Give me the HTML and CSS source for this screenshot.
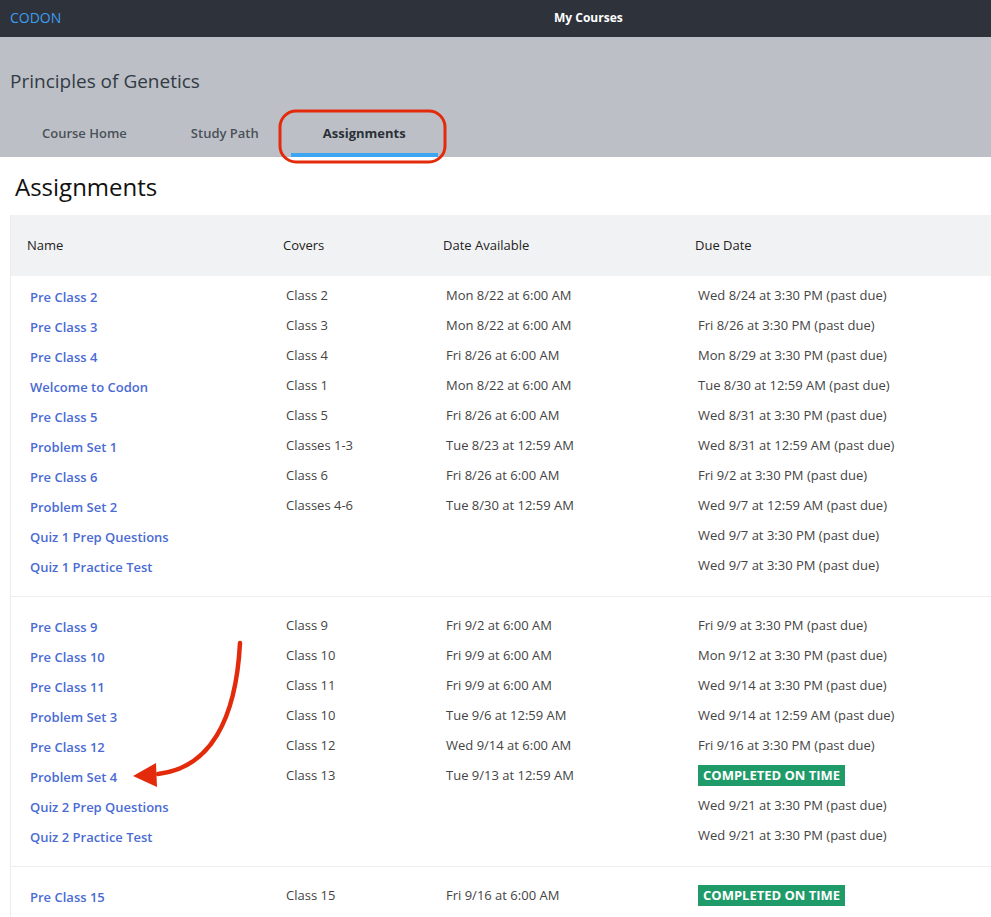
FILE: index.html
```html
<!DOCTYPE html>
<html>
<head>
<meta charset="utf-8">
<link rel="stylesheet" href="styles.css">
</head>
<body>
<div class="page">
  <header class="topbar">
    <span class="logo">CODON</span>
    <span class="topnav">My Courses</span>
  </header>
  <section class="course">
    <h1 class="course-title">Principles of Genetics</h1>
    <nav class="tabs">
      <span class="tab">Course Home</span>
      <span class="tab">Study Path</span>
      <span class="tab active">Assignments</span>
    </nav>
    <svg class="ring" width="172" height="58" viewBox="0 0 172 58"><rect x="2" y="2" width="165" height="51" rx="16" ry="16" fill="none" stroke="#e32b0c" stroke-width="3"/></svg>
  </section>
  <main class="content">
    <h2 class="heading">Assignments</h2>
    <div class="card">
      <div class="thead">
        <span>Name</span><span>Covers</span><span>Date Available</span><span>Due Date</span>
      </div>
      <div class="group first">
        <div class="row"><a>Pre Class 2</a><span>Class 2</span><span>Mon 8/22 at 6:00 AM</span><span>Wed 8/24 at 3:30 PM (past due)</span></div>
        <div class="row"><a>Pre Class 3</a><span>Class 3</span><span>Mon 8/22 at 6:00 AM</span><span>Fri 8/26 at 3:30 PM (past due)</span></div>
        <div class="row"><a>Pre Class 4</a><span>Class 4</span><span>Fri 8/26 at 6:00 AM</span><span>Mon 8/29 at 3:30 PM (past due)</span></div>
        <div class="row"><a>Welcome to Codon</a><span>Class 1</span><span>Mon 8/22 at 6:00 AM</span><span>Tue 8/30 at 12:59 AM (past due)</span></div>
        <div class="row"><a>Pre Class 5</a><span>Class 5</span><span>Fri 8/26 at 6:00 AM</span><span>Wed 8/31 at 3:30 PM (past due)</span></div>
        <div class="row"><a>Problem Set 1</a><span>Classes 1-3</span><span>Tue 8/23 at 12:59 AM</span><span>Wed 8/31 at 12:59 AM (past due)</span></div>
        <div class="row"><a>Pre Class 6</a><span>Class 6</span><span>Fri 8/26 at 6:00 AM</span><span>Fri 9/2 at 3:30 PM (past due)</span></div>
        <div class="row"><a>Problem Set 2</a><span>Classes 4-6</span><span>Tue 8/30 at 12:59 AM</span><span>Wed 9/7 at 12:59 AM (past due)</span></div>
        <div class="row"><a>Quiz 1 Prep Questions</a><span></span><span></span><span>Wed 9/7 at 3:30 PM (past due)</span></div>
        <div class="row"><a>Quiz 1 Practice Test</a><span></span><span></span><span>Wed 9/7 at 3:30 PM (past due)</span></div>
      </div>
      <div class="group">
        <div class="row"><a>Pre Class 9</a><span>Class 9</span><span>Fri 9/2 at 6:00 AM</span><span>Fri 9/9 at 3:30 PM (past due)</span></div>
        <div class="row"><a>Pre Class 10</a><span>Class 10</span><span>Fri 9/9 at 6:00 AM</span><span>Mon 9/12 at 3:30 PM (past due)</span></div>
        <div class="row"><a>Pre Class 11</a><span>Class 11</span><span>Fri 9/9 at 6:00 AM</span><span>Wed 9/14 at 3:30 PM (past due)</span></div>
        <div class="row"><a>Problem Set 3</a><span>Class 10</span><span>Tue 9/6 at 12:59 AM</span><span>Wed 9/14 at 12:59 AM (past due)</span></div>
        <div class="row"><a>Pre Class 12</a><span>Class 12</span><span>Wed 9/14 at 6:00 AM</span><span>Fri 9/16 at 3:30 PM (past due)</span></div>
        <div class="row"><a>Problem Set 4</a><span>Class 13</span><span>Tue 9/13 at 12:59 AM</span><span><b class="badge">COMPLETED ON TIME</b></span></div>
        <div class="row"><a>Quiz 2 Prep Questions</a><span></span><span></span><span>Wed 9/21 at 3:30 PM (past due)</span></div>
        <div class="row"><a>Quiz 2 Practice Test</a><span></span><span></span><span>Wed 9/21 at 3:30 PM (past due)</span></div>
      </div>
      <div class="group">
        <div class="row"><a>Pre Class 15</a><span>Class 15</span><span>Fri 9/16 at 6:00 AM</span><span><b class="badge">COMPLETED ON TIME</b></span></div>
      </div>
    </div>
    <svg class="arrow" width="130" height="160" viewBox="0 0 130 160">
      <path d="M110 3 C106 80 80 128 28 134" fill="none" stroke="#e32b0c" stroke-width="4.5" stroke-linecap="round"/>
      <polygon points="3,136 26,123 27,147" fill="#e32b0c"/>
    </svg>
  </main>
</div>
</body>
</html>
```
FILE: styles.css
```css
html, body {
  margin: 0;
  padding: 0;
  overflow: hidden;
}
body {
  font-family: "Open Sans", "Noto Sans", sans-serif;
  color: #444;
  background: #fff;
}
.page {
  width: 100%;
  position: relative;
}
.topbar {
  height: 37px;
  background: #2e333b;
  display: flex;
  align-items: center;
  padding-left: 10px;
  padding-bottom: 2px;
  box-sizing: border-box;
}
.logo {
  color: #3d9df0;
  font-size: 14px;
  width: 544px;
}
.topnav {
  color: #fff;
  font-size: 12px;
  font-weight: 700;
}
.course {
  background: #bcc0c6;
  height: 120px;
  box-sizing: border-box;
  padding-top: 30px;
  position: relative;
}
.course-title {
  margin: 0 0 0 10px;
  font-size: 19px;
  font-weight: 400;
  line-height: 28px;
  color: #333a44;
}
.tabs {
  display: flex;
  margin-top: 15px;
  padding-left: 10px;
}
.tab {
  padding: 0 32px;
  height: 47px;
  box-sizing: border-box;
  display: flex;
  align-items: center;
  font-size: 13px;
  font-weight: 600;
  color: #4a5059;
  border-bottom: 4px solid transparent;
  padding-top: 3px;
}
.tab.active {
  color: #2b3038;
  font-weight: 700;
  border-bottom-color: #3ea5f2;
}
.ring {
  position: absolute;
  left: 278px;
  top: 72px;
}
.content {
  position: relative;
}
.heading {
  margin: 0;
  padding: 13px 0 12px 15px;
  font-size: 24px;
  font-weight: 400;
  line-height: 33px;
  color: #111;
}
.card {
  margin-left: 10px;
  border-left: 1px solid #ececec;
}
.thead {
  background: #f1f2f4;
  height: 61px;
  box-sizing: border-box;
  padding-bottom: 2px;
  display: grid;
  grid-template-columns: 256px 160px 252px 1fr;
  align-items: center;
  padding-left: 16px;
  font-size: 13px;
  color: #222;
}
.group {
  padding: 15px 0 14px;
  border-bottom: 1px solid #eeeeee;
}
.group.first {
  padding-top: 6px;
}
.row {
  height: 30px;
  display: grid;
  grid-template-columns: 256px 160px 252px 1fr;
  align-items: center;
  padding-left: 19px;
  font-size: 13px;
  color: #444;
}
.row span {
  margin-top: -5px;
}
.row a {
  color: #4a6bd3;
  font-weight: 600;
  font-size: 13px;
}
.badge {
  display: inline-block;
  background: #1f9a69;
  color: #fff;
  font-size: 13px;
  font-weight: 700;
  line-height: 21px;
  padding: 0 5px;
  margin-top: 2px;
}
.arrow {
  position: absolute;
  left: 130px;
  top: 483px;
}
```
